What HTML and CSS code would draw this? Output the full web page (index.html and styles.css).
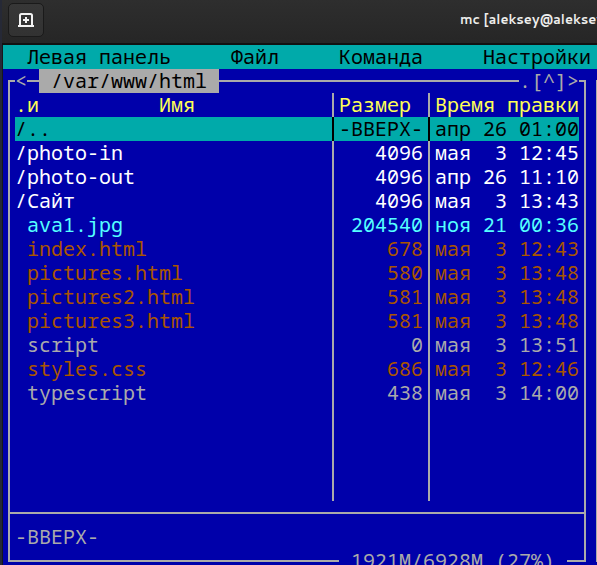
FILE: index.html
```html
<!DOCTYPE html>
<html lang="ru">
<head>
<meta charset="utf-8">
<title>mc</title>
<link rel="stylesheet" href="styles.css">
</head>
<body>
<div class="window">
  <header class="titlebar">
    <button class="new-tab" type="button" aria-label="Новая вкладка">
      <svg width="16" height="16" viewBox="0 0 16 16" aria-hidden="true">
        <path d="M2 13V3.500Q2 2 3.500 2H12.500Q14 2 14 3.500V13" fill="none" stroke="#f2f2f2" stroke-width="2"/>
        <path d="M0 13H16V15H0ZM7 5H9V7H11V9H9V11H7V9H5V7H7Z" fill="#f2f2f2"/>
      </svg>
    </button>
    <h1 class="caption">mc [aleksey@aleksey</h1>
  </header>
  <main class="terminal">
    <nav class="menu">
      <button type="button">Левая панель</button>
      <button type="button">Файл</button>
      <button type="button">Команда</button>
      <button type="button">Настройки</button>
    </nav>
    <div class="panels">
      <section class="panel">
        <button class="on-frame back" type="button">&lt;</button>
        <h2 class="on-frame path">/var/www/html</h2>
        <div class="on-frame tools"><button type="button">.[^]</button><button type="button">&gt;</button></div>
        <table class="files">
          <thead>
            <tr><th class="name"><div class="name-head"><span>.и</span><span>Имя</span></div></th><th class="size">Размер</th><th class="date">Время правки</th></tr>
          </thead>
          <tbody>
            <tr class="cursor"><td>/..</td><td class="num">-ВВЕРХ-</td><td>апр 26 01:00</td></tr>
            <tr class="dir"><td>/photo-in</td><td class="num">4096</td><td>мая  3 12:45</td></tr>
            <tr class="dir"><td>/photo-out</td><td class="num">4096</td><td>апр 26 11:10</td></tr>
            <tr class="dir"><td>/Сайт</td><td class="num">4096</td><td>мая  3 13:43</td></tr>
            <tr class="image"><td> ava1.jpg</td><td class="num">204540</td><td>ноя 21 00:36</td></tr>
            <tr class="doc"><td> index.html</td><td class="num">678</td><td>мая  3 12:43</td></tr>
            <tr class="doc"><td> pictures.html</td><td class="num">580</td><td>мая  3 13:48</td></tr>
            <tr class="doc"><td> pictures2.html</td><td class="num">581</td><td>мая  3 13:48</td></tr>
            <tr class="doc"><td> pictures3.html</td><td class="num">581</td><td>мая  3 13:48</td></tr>
            <tr><td> script</td><td class="num">0</td><td>мая  3 13:51</td></tr>
            <tr class="doc"><td> styles.css</td><td class="num">686</td><td>мая  3 12:46</td></tr>
            <tr><td> typescript</td><td class="num">438</td><td>мая  3 14:00</td></tr>
            <tr class="rest"><td></td><td></td><td></td></tr>
          </tbody>
        </table>
        <p class="status">-ВВЕРХ-</p>
        <p class="on-frame usage">1921M/6928M (27%)</p>
      </section>
      <section class="next-panel"></section>
    </div>
  </main>
</div>
</body>
</html>
```
FILE: styles.css
```css
:root {
  --blue: #0000aa;
  --teal: #00aaaa;
  --grey: #aaaaaa;
}

* {
  box-sizing: border-box;
}

body {
  margin: 0;
  height: 100vh;
  overflow: hidden;
  background: #262936;
}

h1, h2, p {
  margin: 0;
  font-weight: normal;
}

button {
  margin: 0;
  padding: 0;
  border: 0;
  background: none;
  color: inherit;
  font: inherit;
}

.window {
  display: flex;
  flex-direction: column;
  height: 100%;
  margin-left: 2px;
  overflow: hidden;
  background: #16181c;
}

.titlebar {
  display: flex;
  flex: none;
  align-items: center;
  justify-content: space-between;
  height: 45px;
  padding: 0 0 5px 6px;
  border-bottom: 2px solid #111111;
  background: linear-gradient(#2e2e2e, #262626);
}

.new-tab {
  display: flex;
  align-items: center;
  justify-content: center;
  width: 36px;
  height: 34px;
  margin-top: 2px;
  border: 1px solid #1a1a1a;
  border-radius: 5px;
  background: linear-gradient(#373737, #323232);
}

.caption {
  width: 137px;
  overflow: hidden;
  color: #eeeeec;
  font: bold 13px/24px "Cantarell", "Noto Sans", sans-serif;
  white-space: nowrap;
}

.terminal {
  display: flex;
  flex: 1;
  flex-direction: column;
  margin-left: 1px;
  background: var(--blue);
  color: var(--grey);
  font: 20px/24px "Noto Sans Mono", "DejaVu Sans Mono", monospace;
  white-space: pre;
}

.menu {
  display: flex;
  gap: 60px;
  padding-left: 24px;
  background: var(--teal);
  color: #000000;
  white-space: nowrap;
}

.panels {
  display: flex;
  gap: 10px;
  padding: 11px 0 0 5px;
  white-space: normal;
}

.panel {
  position: relative;
  flex: 1;
  padding: 11px 5px 0;
  border: 2px solid var(--grey);
}

.next-panel {
  width: 1px;
  background: var(--grey);
}

.on-frame {
  position: absolute;
  background: var(--blue);
  font-size: 20px;
  white-space: pre;
}

.back, .path, .tools {
  top: -13px;
}

.back {
  left: 5px;
}

.path {
  left: 29px;
  padding: 0 12px;
  background: var(--grey);
  color: #000000;
}

.tools {
  right: 5px;
}

.usage {
  right: 17px;
  bottom: -13px;
  padding: 0 12px;
}

.files {
  width: 100%;
  border-collapse: separate;
  border-spacing: 0;
  table-layout: fixed;
}

.files th, .files td {
  height: 24px;
  padding: 0 0 0 5px;
  border-right: 2px solid var(--grey);
  font-weight: normal;
  text-align: left;
  white-space: pre;
}

.files th:first-child, .files td:first-child {
  padding-left: 0;
}

.files th:last-child, .files td:last-child {
  border-right: 0;
}

.files th {
  color: #ffff55;
}

.files .size {
  width: 96px;
}

.files .date {
  width: 149px;
}

.files .num {
  padding: 0 5px 0 0;
  text-align: right;
}

.name-head {
  display: flex;
  gap: 120px;
}

.files .cursor td {
  border-color: #000000;
  background: var(--teal);
  color: #000000;
}

.dir {
  color: #ffffff;
}

.image {
  color: #55ffff;
}

.doc {
  color: #aa5500;
}

.files .rest td {
  height: 96px;
}

.status {
  margin: 11px -5px 0;
  padding: 11px 5px;
  border-top: 2px solid var(--grey);
}
```
